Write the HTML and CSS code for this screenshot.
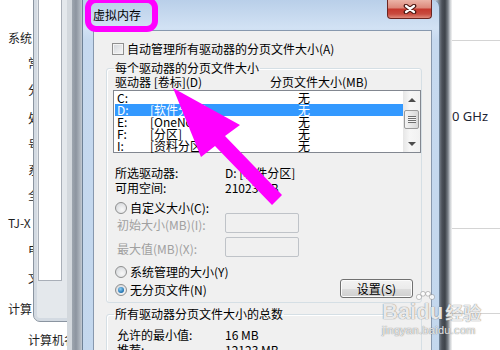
FILE: index.html
```html
<!DOCTYPE html>
<html lang="zh-CN">
<head>
    <meta charset="UTF-8">
    <meta name="viewport" content="width=device-width, initial-scale=1.0">
    <title>虚拟内存</title>
    <link rel="stylesheet" href="styles.css">
</head>
<body>
    <div class="desktop">
        <!-- system properties page behind the dialog -->
        <div class="bg-text">
            <div>系统</div>
            <div class="in">常</div>
            <div class="in">分</div>
            <div class="in">处</div>
            <div class="in">号</div>
            <div class="in">系</div>
            <div class="in">全</div>
            <div>TJ-X</div>
            <div class="in">电</div>
            <div class="in">文</div>
            <div>计算</div>
            <div class="in">计算机名</div>
        </div>

        <div class="win-back">
            <div class="win-back-panel"></div>
        </div>
        <div class="frame-strip"></div>
        <div class="frame-strip-right"></div>

        <div class="info-pane">
            <div class="rule first"></div>
            <div class="ghz">0 GHz</div>
            <div class="rule mid"></div>
            <div class="rule last"></div>
        </div>

        <div class="dialog">
            <div class="titlebar">
                <span class="title">虚拟内存</span>
                <div class="close">
                    <svg width="14" height="10" viewBox="0 0 14 10">
                        <path d="M3 2 L11 8 M11 2 L3 8" stroke="#4a1712" stroke-width="4.6" stroke-linecap="round"/>
                        <path d="M3 2 L11 8 M11 2 L3 8" stroke="#ffffff" stroke-width="2.2" stroke-linecap="round"/>
                    </svg>
                </div>
            </div>

            <div class="client">
                <div class="check-row">
                    <span class="checkbox"></span>
                    <span>自动管理所有驱动器的分页文件大小(A)</span>
                </div>

                <fieldset class="group">
                    <legend>每个驱动器的分页文件大小</legend>
                    <div class="cols">
                        <span>驱动器 [卷标](D)</span>
                        <span>分页文件大小(MB)</span>
                    </div>
                    <div class="listbox">
                        <div class="rows">
                            <div class="row"><span>C:</span><span></span><span>无</span></div>
                            <div class="row sel"><span>D:</span><span>[软件分区]</span><span>无</span></div>
                            <div class="row"><span>E:</span><span>[OneNote]</span><span>无</span></div>
                            <div class="row"><span>F:</span><span>[分区]</span><span>无</span></div>
                            <div class="row"><span>I:</span><span>[资料分区]</span><span>无</span></div>
                        </div>
                        <div class="sb">
                            <div class="sb-btn"><span class="arrow-up"></span></div>
                            <div class="thumb"><span class="grip"></span></div>
                            <div class="sb-space"></div>
                            <div class="sb-btn"><span class="arrow-down"></span></div>
                        </div>
                    </div>

                    <div class="info first">
                        <span class="k">所选驱动器:</span><span>D:  [软件分区]</span>
                    </div>
                    <div class="info">
                        <span class="k">可用空间:</span><span>21023 MB</span>
                    </div>

                    <div class="opt custom">
                        <span class="radio"></span><span>自定义大小(C):</span>
                    </div>
                    <div class="size-row">
                        <span class="k">初始大小(MB)(I):</span><span class="textbox"></span>
                    </div>
                    <div class="size-row second">
                        <span class="k">最大值(MB)(X):</span><span class="textbox"></span>
                    </div>
                    <div class="opt managed">
                        <span class="radio"></span><span>系统管理的大小(Y)</span>
                    </div>
                    <div class="last-row">
                        <div class="opt">
                            <span class="radio checked"></span><span>无分页文件(N)</span>
                        </div>
                        <button class="btn" type="button">设置(S)</button>
                    </div>
                </fieldset>

                <fieldset class="group total">
                    <legend>所有驱动器分页文件大小的总数</legend>
                    <div class="info sum first">
                        <span class="k">允许的最小值:</span><span>16 MB</span>
                    </div>
                    <div class="info sum">
                        <span class="k">推荐:</span><span>12123 MB</span>
                    </div>
                </fieldset>
            </div>
        </div>

        <!-- site watermark -->
        <div class="watermark">
            <div class="wm-top">
                <span>Bai</span>
                <span class="wm-du">du
                    <svg class="paw" width="22" height="16" viewBox="0 0 22 16">
                        <circle cx="5" cy="6" r="2.6"/>
                        <circle cx="9" cy="2.8" r="2.4"/>
                        <circle cx="14" cy="2.8" r="2.4"/>
                        <circle cx="18" cy="6" r="2.6"/>
                    </svg>
                </span>
                <span class="wm-cn">经验</span>
            </div>
            <div class="wm-url">jingyan.baidu.com</div>
        </div>

        <!-- magenta annotations -->
        <svg class="annot" width="500" height="350" viewBox="0 0 500 350">
            <rect x="88" y="0" width="67" height="29" rx="8" fill="none" stroke="#ff00ff" stroke-width="6"/>
            <polygon fill="#ff00ff" points="173,88 240,125 225,136 282,195 272,205 215,146 201,157"/>
        </svg>
    </div>
</body>
</html>
```

FILE: styles.css
```css
* {
    box-sizing: border-box;
}

body {
    margin: 0;
    background-color: #ffffff;
    font-family: "Noto Sans CJK SC", sans-serif;
    font-size: 12px;
    color: #000000;
}

.desktop {
    position: relative;
    width: 500px;
    height: 350px;
    overflow: hidden;
    background-color: #ffffff;
}

/* background window text */
.bg-text {
    display: grid;
    grid-template-rows: 24px 25.5px 28px 28px 26.5px 23px 27px 29.5px 25.5px 30px 32px 29px;
    width: 100px;
    padding: 26px 0 0 8px;
    line-height: 14px;
    color: #1e1e1e;
}

.bg-text div {
    align-self: center;
    white-space: nowrap;
}

.bg-text .in {
    padding-left: 20px;
}

.win-back {
    position: absolute;
    left: 33px;
    top: -10px;
    width: 60px;
    height: 332px;
    padding-left: 4px;
    background-color: #e4e8ec;
    border: 1px solid #8b95a1;
    border-radius: 0 0 0 7px;
    box-shadow: inset 0 0 0 3px #d3dae2;
}

.win-back-panel {
    width: 24px;
    height: 290px;
    background-color: #ffffff;
    border: 1px solid #a9afb8;
    border-top: none;
}

.frame-strip {
    position: absolute;
    left: 67px;
    top: 0;
    width: 20px;
    height: 350px;
    background: linear-gradient(90deg, #d3d8dd 0, #d3d8dd 5px, #9ea6af 5px, #8d95a0 9px, #b5bcc4 14px, #dbe4ee 16px, #dbe4ee 20px);
}

.frame-strip-right {
    position: absolute;
    left: 436px;
    top: 0;
    width: 16px;
    height: 350px;
    background: linear-gradient(90deg, #b4c6da 0, #7d858e 3px, #4c5159 6px, #3f444a 9px, #7b8188 12px, #c9cdd1 14px, #f4f4f4 16px);
}

.info-pane {
    position: absolute;
    left: 452px;
    top: 0;
    width: 48px;
    height: 350px;
    font-family: "Noto Sans", sans-serif;
}

.rule {
    border-top: 1px solid #d4d4d4;
}

.rule.first {
    margin-top: 40px;
}

.ghz {
    margin-top: 67px;
    font-size: 13px;
    line-height: 16px;
    color: #1d2433;
    white-space: nowrap;
}

.rule.mid {
    margin-top: 104px;
}

.rule.last {
    margin-top: 84px;
}

/* virtual memory dialog */
.dialog {
    position: absolute;
    left: 82px;
    top: 0;
    width: 358px;
    height: 380px;
    display: flex;
    flex-direction: column;
    padding: 0 7px 0 10px;
    background: linear-gradient(#b9cfe9, #d2e2f4 28px, #c6d9ef 40px, #c3d7ed);
    border: 1px solid #6e8196;
    border-top: none;
    border-radius: 0 7px 0 0;
}

.titlebar {
    height: 30px;
    flex-shrink: 0;
    display: flex;
    justify-content: space-between;
    align-items: flex-start;
}

.title {
    margin-top: 9px;
    line-height: 12px;
}

.close {
    width: 45px;
    height: 19px;
    display: flex;
    align-items: center;
    justify-content: center;
    border: 1px solid #6b2520;
    border-top: none;
    border-radius: 0 0 4px 4px;
    background: linear-gradient(#ebb3a7 0%, #dd8a7c 42%, #c5392e 52%, #c84b3f 78%, #e08a7b 100%);
}

.client {
    flex: 1;
    padding: 12px 0 0 12px;
    background-color: #f0f0f0;
    border: 1px solid #8798ae;
}

.check-row {
    display: flex;
    align-items: center;
    gap: 3px;
    height: 12px;
    padding-left: 6px;
    line-height: 12px;
    white-space: nowrap;
}

.checkbox {
    width: 12px;
    height: 12px;
    border: 1px solid #8f8f8f;
    background: linear-gradient(135deg, #d2d5da, #f7f7f7);
    box-shadow: inset 0 0 0 1px #f4f4f4;
}

.group {
    width: 316px;
    min-width: 0;
    margin: 7px 0 0 0;
    padding: 0 0 4px 7px;
    border: 1px solid #d5dfe5;
    border-radius: 3px;
    box-shadow: inset 1px 1px 0 #ffffff;
}

.group legend {
    padding: 0 1px;
    line-height: 12px;
}

.group.total {
    margin-top: 5px;
    padding-bottom: 30px;
}

.cols {
    display: grid;
    grid-template-columns: 155px auto;
    margin-top: 2px;
    padding-left: 1px;
    line-height: 12px;
    white-space: nowrap;
}

.listbox {
    display: flex;
    width: 308px;
    height: 63px;
    margin: 2px 0 0 -1px;
    background-color: #ffffff;
    border: 1px solid #828790;
}

.rows {
    flex: 1;
    padding: 1px 0 0 1px;
}

.row {
    display: grid;
    grid-template-columns: 33px 148px auto;
    height: 12px;
    padding-left: 2px;
    line-height: 12px;
    white-space: nowrap;
}

.row.sel {
    background-color: #3399ff;
    color: #ffffff;
}

.sb {
    width: 17px;
    display: flex;
    flex-direction: column;
    align-items: center;
    background: linear-gradient(90deg, #e6e6e6, #f6f6f6 40%, #f1f1f1);
}

.sb-btn {
    width: 17px;
    height: 17px;
    display: flex;
    align-items: center;
    justify-content: center;
}

.arrow-up {
    border-left: 4px solid transparent;
    border-right: 4px solid transparent;
    border-bottom: 4px solid #4d4d4d;
}

.arrow-down {
    border-left: 4px solid transparent;
    border-right: 4px solid transparent;
    border-top: 4px solid #4d4d4d;
}

.thumb {
    width: 15px;
    height: 19px;
    margin-top: 2px;
    display: flex;
    align-items: center;
    justify-content: center;
    border: 1px solid #9a9a9a;
    border-radius: 2px;
    background: linear-gradient(90deg, #f3f3f3, #e6e6e6 50%, #d8d8d8);
}

.grip {
    width: 8px;
    height: 7px;
    background: repeating-linear-gradient(#6f6f6f 0, #6f6f6f 1px, #f4f4f4 1px, #f4f4f4 2px);
}

.sb-space {
    flex: 1;
}

.info {
    display: flex;
    padding-left: 1px;
    line-height: 12px;
    white-space: nowrap;
}

.info .k {
    width: 110px;
}

.info.first {
    margin-top: 14px;
}

.info + .info {
    margin-top: 3px;
}

.info.sum {
    padding-left: 3px;
}

.info.sum .k {
    width: 108px;
}

.info.sum.first {
    margin-top: 9px;
}

.opt {
    display: flex;
    align-items: center;
    gap: 3px;
    height: 12px;
    padding-left: 1px;
    line-height: 12px;
    white-space: nowrap;
}

.opt.custom {
    margin-top: 8px;
}

.opt.managed {
    margin-top: 9px;
}

.radio {
    width: 12px;
    height: 12px;
    border: 1px solid #8e8f8f;
    border-radius: 50%;
    background: radial-gradient(circle at 60% 65%, #f8f8f8, #d0d3d7);
    display: flex;
    align-items: center;
    justify-content: center;
}

.radio.checked::after {
    content: "";
    width: 6px;
    height: 6px;
    border-radius: 50%;
    background: radial-gradient(circle at 40% 35%, #8fd0f5, #1e6fae 70%, #12507f);
}

.size-row {
    display: flex;
    height: 20px;
    margin-top: -1px;
    padding-left: 3px;
    color: #a0a0a0;
    white-space: nowrap;
}

.size-row.second {
    margin-top: 4px;
}

.size-row .k {
    width: 108px;
    align-self: flex-end;
    margin-bottom: 2px;
    line-height: 12px;
}

.textbox {
    width: 74px;
    height: 20px;
    background-color: #f0f0f0;
    border: 1px solid #bfc3c8;
    border-radius: 2px;
}

.last-row {
    display: flex;
    align-items: flex-end;
    height: 19px;
    margin-top: 1px;
}

.last-row .opt {
    margin-bottom: 2px;
}

.btn {
    width: 73px;
    height: 19px;
    margin: 0 8px 0 auto;
    padding: 0;
    font-family: inherit;
    font-size: 12px;
    line-height: 12px;
    color: #000000;
    border: 1px solid #707070;
    border-radius: 3px;
    background: linear-gradient(#f2f2f2 0%, #ebebeb 50%, #dddddd 51%, #cfcfcf 100%);
    box-shadow: inset 0 0 0 1px #fbfbfb;
}

/* overlays */
.watermark {
    position: absolute;
    left: 382px;
    top: 300px;
    color: rgba(255, 255, 255, 0.85);
    text-shadow: 0 0 1px rgba(90, 90, 90, 0.6), 0 0 1px rgba(90, 90, 90, 0.6);
    font-family: "Liberation Sans", sans-serif;
    font-weight: bold;
}

.wm-top {
    display: flex;
    align-items: flex-end;
    font-size: 22px;
    line-height: 24px;
}

.wm-du {
    position: relative;
}

.paw {
    position: absolute;
    left: -2px;
    top: -9px;
    fill: rgba(255, 255, 255, 0.85);
    stroke: rgba(110, 110, 110, 0.5);
    stroke-width: 0.8;
}

.wm-cn {
    margin-left: 2px;
    font-family: "Noto Sans CJK SC", sans-serif;
    font-size: 18px;
}

.wm-url {
    font-size: 11px;
    line-height: 13px;
    font-weight: normal;
    letter-spacing: 0.3px;
}

.annot {
    position: absolute;
    left: 0;
    top: 0;
    pointer-events: none;
}
```
